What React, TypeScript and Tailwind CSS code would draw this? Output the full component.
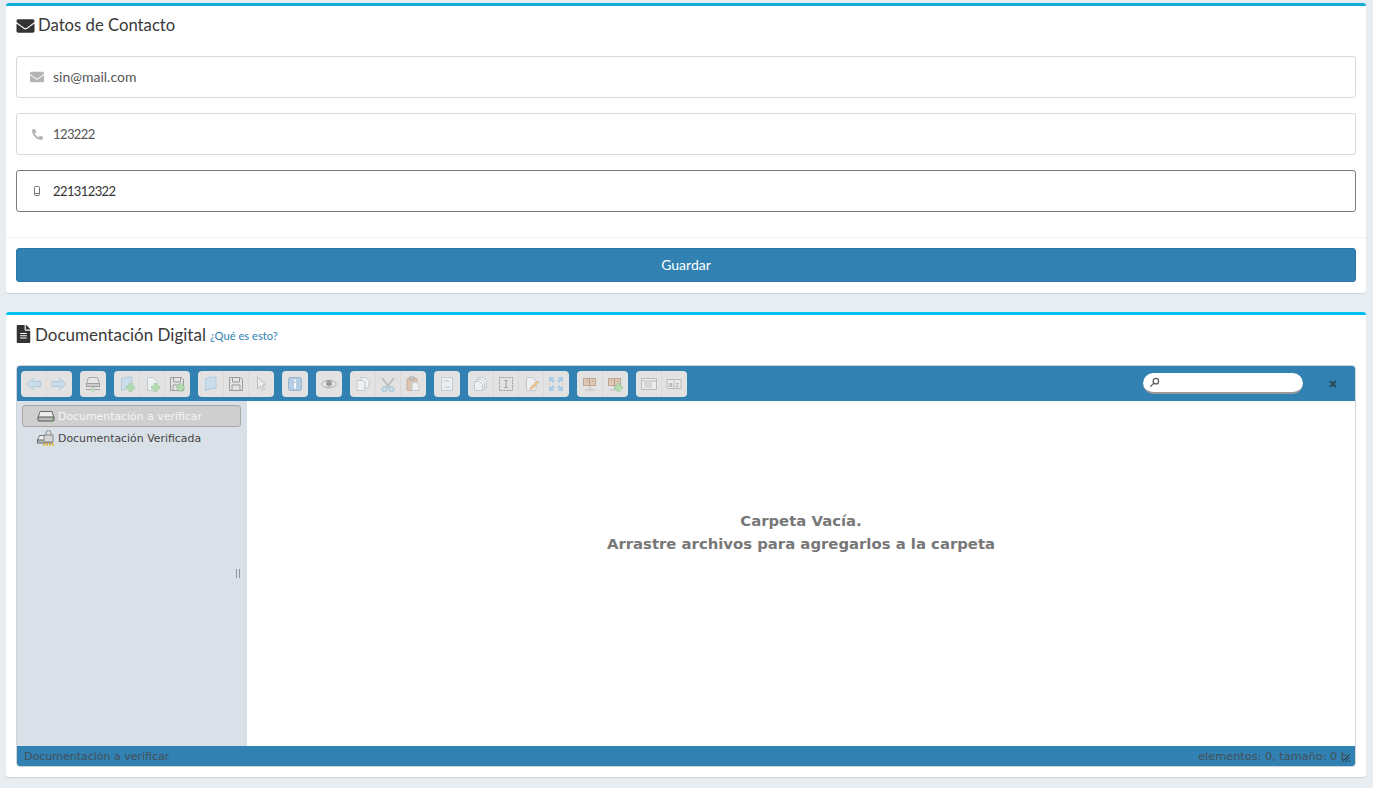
import { FaEnvelope, FaPhone, FaFileAlt } from 'react-icons/fa'

// toolbar icon glyphs, drawn on a 16x16 grid
function Glyph({ name }: { name: string }) {
  const blue = { fill: '#c4dcec', stroke: '#a3c6dc' }
  const paper = { fill: '#f1f3f4', stroke: '#bcc6cc' }
  const plus = <path d="M11 9h3v2.500h2.500v3H14V17h-3v-2.500H8.500v-3H11z" fill="#a6dba6" stroke="#86c286" strokeWidth="0.5" transform="translate(-1 -1.500)" />
  const page = <path d="M3.500 1.500h6l3.500 3.500v9.500h-9.500z" {...paper} />
  const folder = <path d="M2.500 2.500l6-1.500h4.500v11.500H8.500l-6 2z" {...blue} />
  const floppy = <path d="M1.500 1.500h11l2 2v11h-13zM4.500 2v4h7V2M4 14v-5h8v5" fill="#e2e2e2" stroke="#8a8a8a" />
  const cabinet = (
    <g>
      <path d="M3 14h10M8 8v6" stroke="#b5b5b5" />
      <rect x="1.500" y="2.500" width="12" height="7" fill="#e3c3a8" stroke="#b39a86" />
      <path d="M7.500 2.500v7M4 5h1.500M10 5h1.500" stroke="#a88a74" />
    </g>
  )

  switch (name) {
    case 'back':
      return <svg viewBox="0 0 16 16" className="h-4 w-4"><path d="M1 8l6-5.500V5.500h8v5H7v3z" {...blue} /></svg>
    case 'forward':
      return <svg viewBox="0 0 16 16" className="h-4 w-4"><path d="M15 8L9 2.500V5.500H1v5h8v3z" {...blue} /></svg>
    case 'netmount':
      return (
        <svg viewBox="0 0 16 16" className="h-4 w-4">
          <path d="M3.500 1.500h9l2 6h-13z" fill="#e6e6e6" stroke="#9a9a9a" />
          <rect x="1.500" y="7.500" width="13" height="3" fill="#c8c8c8" stroke="#8f8f8f" />
          <path d="M1 13.500h14M8 10.500v3" stroke="#9a9a9a" />
          <circle cx="8" cy="14" r="1.800" fill="#a6dba6" />
        </svg>
      )
    case 'mkdir':
      return <svg viewBox="0 0 16 16" className="h-4 w-4">{folder}{plus}</svg>
    case 'mkfile':
      return <svg viewBox="0 0 16 16" className="h-4 w-4">{page}{plus}</svg>
    case 'upload':
      return <svg viewBox="0 0 16 16" className="h-4 w-4">{floppy}{plus}</svg>
    case 'open':
      return <svg viewBox="0 0 16 16" className="h-4 w-4">{folder}</svg>
    case 'save':
      return <svg viewBox="0 0 16 16" className="h-4 w-4">{floppy}</svg>
    case 'select':
      return <svg viewBox="0 0 16 16" className="h-4 w-4"><path d="M4.500 1v11.500l3-2.500 2 4.500 2-1-2-4.500h3.500z" fill="#f1f1f1" stroke="#b5b5b5" /></svg>
    case 'info':
      return (
        <svg viewBox="0 0 16 16" className="h-4 w-4">
          <rect x="1.500" y="1.500" width="13" height="13" rx="2" fill="#a9c8e6" stroke="#86a9cc" />
          <path d="M7 3.500h2v2H7zM7 7h2v5.500H7z" fill="#fff" />
        </svg>
      )
    case 'view':
      return (
        <svg viewBox="0 0 16 16" className="h-4 w-4">
          <path d="M0.500 8c3-5 12-5 15 0-3 5-12 5-15 0z" fill="#ececec" stroke="#9a9a9a" />
          <circle cx="8" cy="7.500" r="3" fill="#8c8c8c" />
        </svg>
      )
    case 'copy':
      return <svg viewBox="0 0 16 16" className="h-4 w-4"><path d="M2 4.500h6l2 2v8H2z" {...paper} /><path d="M6 1.500h5l3 3v7.500h-4V6.500l-2-2H6z" {...paper} /></svg>
    case 'cut':
      return (
        <svg viewBox="0 0 16 16" className="h-4 w-4">
          <path d="M2 2l8 10M14 2L6 12" stroke="#b3b3b3" strokeWidth="1.800" />
          <circle cx="4.500" cy="13" r="2.200" fill="none" stroke="#9cc4de" strokeWidth="1.500" />
          <circle cx="11.500" cy="13" r="2.200" fill="none" stroke="#9cc4de" strokeWidth="1.500" />
        </svg>
      )
    case 'paste':
      return (
        <svg viewBox="0 0 16 16" className="h-4 w-4">
          <rect x="2" y="2.500" width="10" height="12" rx="1" fill="#dcbfa6" stroke="#bfa18a" />
          <rect x="5" y="1" width="4" height="3" fill="#c9c9c9" stroke="#a0a0a0" />
          <path d="M7 6.500h5l2 2v6H7z" {...paper} />
        </svg>
      )
    case 'rename':
      return (
        <svg viewBox="0 0 16 16" className="h-4 w-4">
          <rect x="2.500" y="1.500" width="11" height="13" fill="#eef1f4" stroke="#c2c9cf" />
          <path d="M5 6c1-2 4-2 5 0M11 10c-1 2-4 2-5 0" fill="none" stroke="#9cbad0" />
        </svg>
      )
    case 'duplicate':
      return <svg viewBox="0 0 16 16" className="h-4 w-4"><path d="M5.500 1.500h5l3 3v7h-8z" {...paper} /><path d="M3.500 3.500h5l3 3v7h-8z" {...paper} /><path d="M1.500 5.500h5l3 3v6h-8z" {...paper} /></svg>
    case 'edit-text':
      return (
        <svg viewBox="0 0 16 16" className="h-4 w-4">
          <rect x="1.500" y="1.500" width="13" height="13" fill="none" stroke="#8a8a8a" strokeDasharray="2 1" />
          <path d="M6.500 4.500h3M6.500 11.500h3M8 4.500v7" stroke="#8a8a8a" fill="none" />
        </svg>
      )
    case 'edit':
      return (
        <svg viewBox="0 0 16 16" className="h-4 w-4">
          {page}
          <path d="M7 13.500l1-2.500 6-6 1.500 1.500-6 6z" fill="#eec27e" stroke="#c9925a" strokeWidth="0.6" />
        </svg>
      )
    case 'fullscreen':
      return (
        <svg viewBox="0 0 16 16" className="h-4 w-4" fill="#9ec8e4">
          <path d="M1 1h5.500L5 2.800 7 4.800 4.800 7 2.800 5 1 6.500zM15 1v5.500L13.200 5 11.200 7 9 4.800 11 2.800 9.500 1zM1 15V9.500L2.800 11l2-2L7 11.200l-2 2 1.500 1.800zM15 15H9.500L11 13.200l-2-2L11.200 9l2 2L15 9.500z" />
        </svg>
      )
    case 'archive':
      return <svg viewBox="0 0 16 16" className="h-4 w-4">{cabinet}</svg>
    case 'extract':
      return <svg viewBox="0 0 16 16" className="h-4 w-4">{cabinet}{plus}</svg>
    case 'list':
      return (
        <svg viewBox="0 0 16 16" className="h-4 w-4">
          <rect x="0.500" y="2.500" width="15" height="11" fill="#efefef" stroke="#b0b0b0" />
          <path d="M0.500 5h15" stroke="#b0b0b0" />
          <path d="M3 7h8M3 9h8M3 11h8" stroke="#b8b8b8" />
        </svg>
      )
    default:
      return (
        <svg viewBox="0 0 16 16" className="h-4 w-4">
          <path d="M1 3.500h14v9H1z" fill="#ececec" stroke="#b0b0b0" />
          <path d="M8 3v10" stroke="#b0b0b0" />
          <text x="2.500" y="10.500" fontSize="7" fontFamily="Liberation Sans, sans-serif" fill="#8a8a8a">a</text>
          <text x="9.500" y="10.500" fontSize="7" fontFamily="Liberation Sans, sans-serif" fill="#8a8a8a">z</text>
        </svg>
      )
  }
}

const toolbarGroups = [
  ['back', 'forward'],
  ['netmount'],
  ['mkdir', 'mkfile', 'upload'],
  ['open', 'save', 'select'],
  ['info'],
  ['view'],
  ['copy', 'cut', 'paste'],
  ['rename'],
  ['duplicate', 'edit-text', 'edit', 'fullscreen'],
  ['archive', 'extract'],
  ['list', 'sort'],
]

function ContactField({ icon, value, numeric, focused }: { icon: React.ReactNode; value: string; numeric?: boolean; focused?: boolean }) {
  return (
    <div className={`flex h-[42px] items-center rounded-[3px] border bg-white ${focused ? 'border-[#7a7a7a]' : 'border-[#d9d9d9]'}`}>
      <span className={`flex w-[36px] justify-center pl-[4px] ${focused ? 'text-[#777]' : 'text-[#b5b5b5]'}`}>{icon}</span>
      <input
        readOnly
        value={value}
        className={`h-full flex-1 bg-transparent pb-[1px] outline-none ${numeric ? 'text-[13px] tracking-[-0.6px]' : 'text-[14px]'} ${focused ? 'text-[#333]' : 'text-[#555]'}`}
      />
    </div>
  )
}

export default function App() {
  return (
    <div className="flex h-[788px] flex-col gap-[19px] overflow-hidden bg-[#e8edf2] pl-[6px] pr-[7px] pt-[3px] font-['Lato',sans-serif] text-[#333]">
      {/* Datos de Contacto */}
      <section className="h-[290px] rounded-[3px] border-t-[3px] border-[#14add9] bg-white shadow-[0_1px_1px_rgba(0,0,0,0.12)]">
        <h3 className="flex h-[40px] items-center gap-[3px] px-[10px] pb-[1px] text-[16.700px] leading-none text-[#3a3a3a]">
          <FaEnvelope className="h-[18px] w-[19px] text-[#333]" />
          Datos de Contacto
        </h3>
        <div className="flex flex-col gap-[15px] px-[10px] pt-[10px]">
          <ContactField icon={<FaEnvelope className="h-[14px] w-[14px]" />} value="sin@mail.com" />
          <ContactField icon={<FaPhone className="h-[11px] w-[11px] rotate-90" />} value="123222" numeric />
          <ContactField
            focused
            numeric
            icon={
              <svg viewBox="0 0 6 10" className="h-[10px] w-[6px]">
                <rect x="0.500" y="0.500" width="5" height="9" rx="1" fill="none" stroke="currentColor" />
                <path d="M0.500 7.500h5" stroke="currentColor" />
              </svg>
            }
            value="221312322"
          />
        </div>
        <div className="mt-[25px] border-t border-[#f2f2f2] px-[10px] pt-[10px]">
          <button className="h-[34px] w-full rounded-[3px] border border-[#2b77a6] bg-[#3181b2] pb-[2px] text-[14px] text-white">
            Guardar
          </button>
        </div>
      </section>

      {/* Documentación Digital */}
      <section className="h-[465px] rounded-[3px] border-t-[3px] border-[#00c0ef] bg-white shadow-[0_1px_1px_rgba(0,0,0,0.12)]">
        <h3 className="flex h-[38px] items-center gap-[4px] px-[10px] text-[17px] leading-none text-[#3a3a3a]">
          <FaFileAlt className="h-[18px] w-[15px] text-[#333]" />
          Documentación Digital
          <a className="mt-[3px] text-[11.200px] text-[#3181b2]">¿Qué es esto?</a>
        </h3>

        <div className="mx-[10px] mt-[12px] flex h-[402px] flex-col overflow-hidden rounded-[4px] border border-[#d0d5da] font-['DejaVu_Sans',sans-serif]">
          {/* toolbar */}
          <div className="flex h-[35px] shrink-0 items-center gap-[8px] bg-[#3181b2] pl-[4px]">
            {toolbarGroups.map((group) => (
              <div key={group.join('-')} className="flex h-[26px] rounded-[4px] bg-[#e2e2e2] pr-px">
                {group.map((name, i) => (
                  <div
                    key={name}
                    className={`flex w-[25px] items-center justify-center opacity-80 ${i > 0 ? 'border-l border-[#d6d6d6]' : ''}`}
                  >
                    <Glyph name={name} />
                  </div>
                ))}
              </div>
            ))}
            <div className="ml-auto flex h-[21px] w-[160px] items-center rounded-full border-b-2 border-[#999] bg-white pl-[6px]">
              <svg viewBox="0 0 12 12" className="h-[11px] w-[11px]" fill="none" stroke="#555" strokeWidth="1.300">
                <circle cx="7.500" cy="4.500" r="3" />
                <path d="M5.300 6.700L1.500 10.500" />
              </svg>
            </div>
            <div className="flex w-[44px] items-center justify-center">
              <svg viewBox="0 0 8 8" className="h-[8px] w-[8px]" stroke="#2f4858" strokeWidth="2">
                <path d="M1 1l6 6M7 1L1 7" />
              </svg>
            </div>
          </div>

          {/* tree and work area */}
          <div className="flex min-h-0 flex-1">
            <aside className="relative w-[230px] shrink-0 bg-[#d9e0e7] pl-[5px] pr-[6px] pt-[4px] text-[10.900px] text-[#444]">
              <div className="flex h-[22px] items-center gap-[3px] rounded-[3px] border border-[#a8a8a8] bg-[#cfcfcf] pl-[14px] pt-[2px] text-[#f5f5f5]">
                <svg viewBox="0 0 18 12" className="-mt-[2px] h-[12px] w-[18px]">
                  <path d="M3 1.500h12l2 6H1z" fill="#eee" stroke="#666" />
                  <rect x="1" y="7" width="16" height="4" rx="1" fill="#bbb" stroke="#555" />
                  <path d="M14 9h2" stroke="#5fce5f" />
                </svg>
                Documentación a verificar
              </div>
              <div className="flex h-[22px] items-center gap-[3px] pl-[15px] pt-[2px]">
                <svg viewBox="0 0 18 16" className="-mt-[2px] h-[16px] w-[18px]">
                  <path d="M2.500 5.500h9l2 5h-13z" fill="#eee" stroke="#777" />
                  <rect x="0.500" y="10" width="14" height="3" fill="#bbb" stroke="#666" />
                  <rect x="7" y="5" width="9" height="7" fill="#d4d4d4" stroke="#888" />
                  <path d="M9 5V3a2.500 2.500 0 0 1 5 0v2" fill="none" stroke="#888" />
                  <path d="M6 14.500h11" stroke="#e6b422" strokeWidth="2" strokeDasharray="2 1" />
                </svg>
                Documentación Verificada
              </div>
              {/* resize handle */}
              <span className="absolute right-[7px] top-[168px] h-[9px] w-[4px] border-x border-[#8f979e]" />
            </aside>
            <main className="flex flex-1 flex-col items-center justify-center bg-white pb-[82px] text-[14.850px] font-bold leading-[23px] text-[#777]">
              <span>Carpeta Vacía.</span>
              <span>Arrastre archivos para agregarlos a la carpeta</span>
            </main>
          </div>

          {/* status bar */}
          <div className="relative flex h-[20px] shrink-0 items-center justify-between bg-[#3181b2] pl-[7px] pr-[7px] pt-[2px] text-[11px] text-[#444f57]">
            <span>Documentación a verificar</span>
            <span className="text-[11.300px]">elementos: 0, tamaño: 0 b</span>
            {/* resize grip */}
            <svg viewBox="0 0 10 10" className="absolute bottom-[3px] right-[4px] h-[10px] w-[10px]" stroke="#2b3b46">
              <path d="M1 9l8-8M4 9l5-5M7 9l2-2" />
            </svg>
          </div>
        </div>
      </section>
    </div>
  )
}
